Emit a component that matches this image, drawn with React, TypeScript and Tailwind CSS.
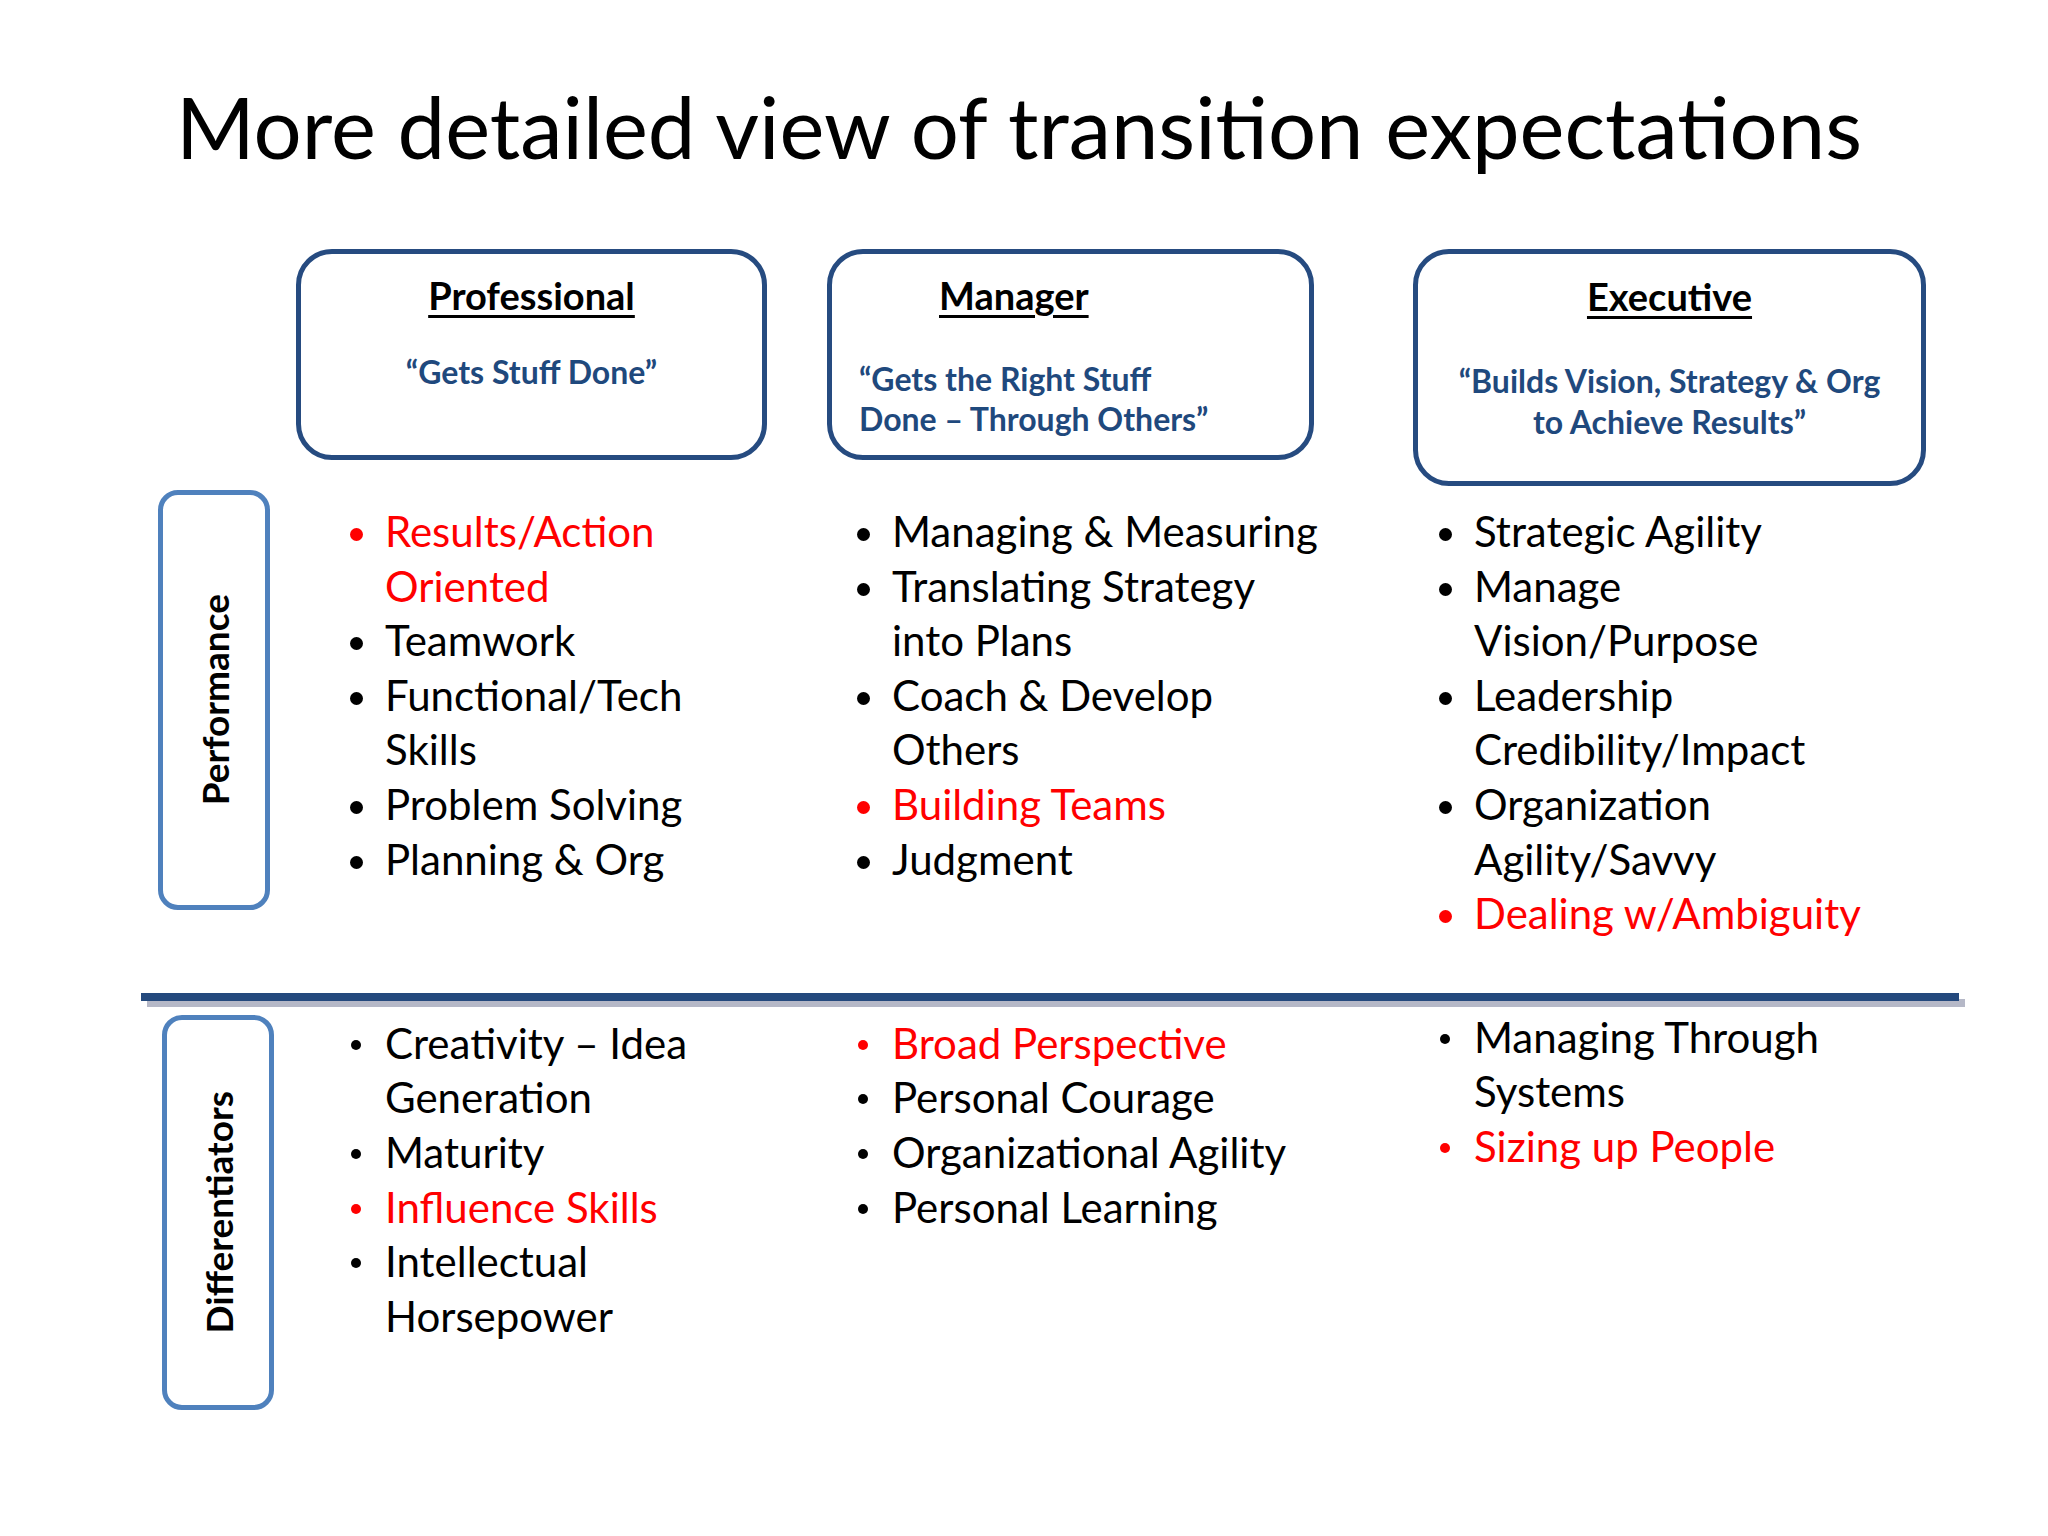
import React from "react";

type Item = { lines: string[]; red?: boolean };

function BulletList({ items, big, className }: { items: Item[]; big?: boolean; className?: string }) {
  return (
    <ul className={className}>
      {items.map((it, i) => (
        <li key={i} className={`flex ${it.red ? "text-[#ff0000]" : "text-black"}`}>
          <span className="w-[35px] shrink-0 pt-[24px]">
            <span
              className={`block rounded-full ${big ? "w-[13px] h-[13px]" : "w-[10px] h-[10px] ml-[1px]"} ${
                it.red ? "bg-[#ff0000]" : "bg-black"
              }`}
            />
          </span>
          <span className="whitespace-nowrap">
            {it.lines.map((l, j) => (
              <span key={j} className="block">
                {l}
              </span>
            ))}
          </span>
        </li>
      ))}
    </ul>
  );
}

function SideLabel({ label, className }: { label: string; className: string }) {
  return (
    <div
      className={`shrink-0 w-[112px] border-[5px] border-[#4f81bd] rounded-[20px] flex items-center justify-center ${className}`}
    >
      <span className="[writing-mode:vertical-rl] rotate-180 font-bold text-[37px] leading-none text-black">
        {label}
      </span>
    </div>
  );
}

const perf1: Item[] = [
  { lines: ["Results/Action", "Oriented"], red: true },
  { lines: ["Teamwork"] },
  { lines: ["Functional/Tech", "Skills"] },
  { lines: ["Problem Solving"] },
  { lines: ["Planning & Org"] },
];
const perf2: Item[] = [
  { lines: ["Managing & Measuring"] },
  { lines: ["Translating Strategy", "into Plans"] },
  { lines: ["Coach & Develop", "Others"] },
  { lines: ["Building Teams"], red: true },
  { lines: ["Judgment"] },
];
const perf3: Item[] = [
  { lines: ["Strategic Agility"] },
  { lines: ["Manage", "Vision/Purpose"] },
  { lines: ["Leadership", "Credibility/Impact"] },
  { lines: ["Organization", "Agility/Savvy"] },
  { lines: ["Dealing w/Ambiguity"], red: true },
];
const diff1: Item[] = [
  { lines: ["Creativity \u2013 Idea", "Generation"] },
  { lines: ["Maturity"] },
  { lines: ["Influence Skills"], red: true },
  { lines: ["Intellectual", "Horsepower"] },
];
const diff2: Item[] = [
  { lines: ["Broad Perspective"], red: true },
  { lines: ["Personal Courage"] },
  { lines: ["Organizational Agility"] },
  { lines: ["Personal Learning"] },
];
const diff3: Item[] = [
  { lines: ["Managing Through", "Systems"] },
  { lines: ["Sizing up People"], red: true },
];

export default function App() {
  return (
    <div className="w-[2048px] h-[1536px] bg-white font-['Lato',sans-serif] overflow-hidden">
      {/* Title */}
      <h1 className="pt-[77px] text-center text-[85px] leading-[98px] font-normal text-black pr-[10px]">
        More detailed view of transition expectations
      </h1>

      {/* Header boxes */}
      <div className="mt-[74px] flex items-start pl-[296px]">
        <div className="w-[471px] h-[211px] border-[5px] border-[#264b80] rounded-[36px] text-center">
          <div className="pt-[19px] text-[38px] leading-[44px] font-bold text-black">
            <span className="underline decoration-[3px] underline-offset-[5px]">Professional</span>
          </div>
          <div className="mt-[35px] text-[32px] leading-[40px] font-bold text-[#1f497d]">
            {"\u201CGets Stuff Done\u201D"}
          </div>
        </div>
        <div className="ml-[60px] w-[487px] h-[211px] border-[5px] border-[#264b80] rounded-[36px]">
          <div className="pt-[19px] pl-[107px] text-[38px] leading-[44px] font-bold text-black">
            <span className="underline decoration-[3px] underline-offset-[5px]">Manager</span>
          </div>
          <div className="mt-[42px] pl-[27px] text-[32px] leading-[40px] font-bold text-[#1f497d]">
            <div>{"\u201CGets the Right Stuff"}</div>
            <div>{"Done \u2013 Through Others\u201D"}</div>
          </div>
        </div>
        <div className="ml-[99px] w-[513px] h-[237px] border-[5px] border-[#264b80] rounded-[36px] text-center">
          <div className="pt-[20px] text-[38px] leading-[44px] font-bold text-black">
            <span className="underline decoration-[3px] underline-offset-[5px]">Executive</span>
          </div>
          <div className="mt-[42px] text-[32px] leading-[41px] font-bold text-[#1f497d]">
            <div>{"\u201CBuilds Vision, Strategy & Org"}</div>
            <div>{"to Achieve Results\u201D"}</div>
          </div>
        </div>
      </div>

      {/* Performance row */}
      <div className="mt-[4px] flex items-start pl-[158px] text-[42px] leading-[54.6px]">
        <SideLabel label="Performance" className="h-[420px]" />
        <BulletList big items={perf1} className="ml-[80px] w-[507px] mt-[14px]" />
        <BulletList big items={perf2} className="w-[582px] mt-[14px]" />
        <BulletList big items={perf3} className="flex-1 mt-[14px]" />
      </div>

      {/* Divider */}
      <div className="mt-[52px] ml-[141px] w-[1818px] h-[8px] bg-[#24497d] shadow-[6px_6px_0_#b5b8c7]" />

      {/* Differentiators row */}
      <div className="mt-[14px] flex items-start pl-[162px] text-[42px] leading-[54.6px]">
        <SideLabel label="Differentiators" className="h-[395px]" />
        <BulletList items={diff1} className="ml-[76px] w-[507px] mt-[1px]" />
        <BulletList items={diff2} className="w-[582px] mt-[1px]" />
        <BulletList items={diff3} className="flex-1 -mt-[5px]" />
      </div>
    </div>
  );
}
